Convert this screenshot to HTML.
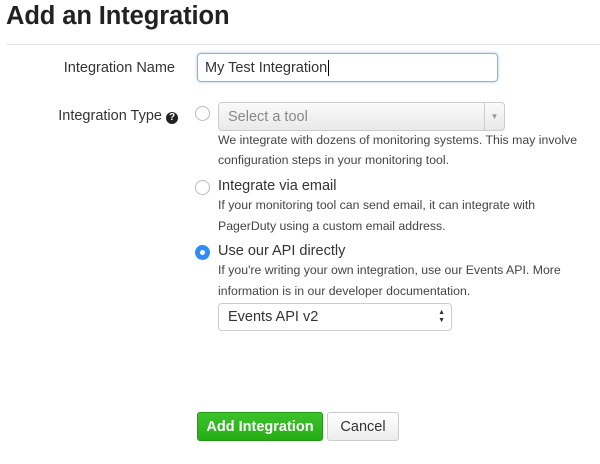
<!DOCTYPE html>
<html><head><style>
*{box-sizing:border-box;margin:0;padding:0}
body{width:600px;height:464px;background:#fff;font-family:"Liberation Sans",sans-serif;color:#333;position:relative;overflow:hidden}
.a{position:absolute;white-space:nowrap}
h1{position:absolute;left:6px;top:2px;font-size:25.5px;font-weight:bold;color:#222;letter-spacing:-0.1px}
.hr{position:absolute;left:6px;right:0;top:44px;border-top:1px solid #e8e8e8}
.lbl{font-size:14.5px;color:#333;text-align:right;width:175px;left:0}
.help{font-size:12.3px;color:#444;left:218px}
.opt{font-size:14.5px;color:#333;left:218px}
.radio{position:absolute;width:15px;height:15px;border-radius:50%;border:1px solid #bbb;background:#fff;left:195px}
</style></head><body>
<h1>Add an Integration</h1>
<div class="hr"></div>
<div class="a lbl" style="top:60px">Integration Name</div>
<div class="a" style="left:197px;top:53px;width:301px;height:29px;border:1px solid #7fb4e8;border-radius:4px;box-shadow:0 0 3px #a8cdf0;font-size:14.5px;padding:6px 7px;color:#333">My Test Integration<span style="border-left:1px solid #000;margin-left:1px"></span></div>
<div class="a lbl" style="top:108px;width:178px">Integration Type <span style="display:inline-block;width:12px;height:12px;border-radius:50%;background:#222;color:#fff;font-size:10px;line-height:12px;text-align:center;font-weight:bold;vertical-align:0">?</span></div>
<div class="radio" style="top:106px"></div>
<div class="a" style="left:218px;top:102px;width:287px;height:29px;border:1px solid #ccc;border-radius:4px;background:linear-gradient(#fafafa,#e9e9e9);font-size:14.5px;color:#888;padding:6px 9px">Select a tool<div style="position:absolute;right:0;top:0;width:20px;height:27px;border-left:1px solid #ccc;color:#999;font-size:8px;text-align:center;line-height:27px">▼</div></div>
<div class="a help" style="top:133px">We integrate with dozens of monitoring systems. This may involve</div>
<div class="a help" style="top:153px">configuration steps in your monitoring tool.</div>
<div class="radio" style="top:180px"></div>
<div class="a opt" style="top:178px">Integrate via email</div>
<div class="a help" style="top:198px">If your monitoring tool can send email, it can integrate with</div>
<div class="a help" style="top:219px">PagerDuty using a custom email address.</div>
<div class="radio" style="top:245px;border:none;background:#2f8df5"><div style="position:absolute;left:5px;top:5px;width:5px;height:5px;border-radius:50%;background:#fff"></div></div>
<div class="a opt" style="top:243px">Use our API directly</div>
<div class="a help" style="top:263px">If you're writing your own integration, use our Events API. More</div>
<div class="a help" style="top:284px">information is in our developer documentation.</div>
<div class="a" style="left:218px;top:303px;width:234px;height:28px;border:1px solid #ccc;border-radius:4px;background:#fff;font-size:14.5px;color:#333;padding:5px 9px">Events API v2<span style="position:absolute;right:6px;top:5px;font-size:7px;line-height:8px;color:#333">▲<br>▼</span></div>
<div class="a" style="left:197px;top:412px;width:126px;height:29px;border:1px solid #1f9a12;border-radius:3px;background:linear-gradient(#3cc32a,#26ad16);color:#fff;font-weight:bold;font-size:14.5px;text-align:center;line-height:28px">Add Integration</div>
<div class="a" style="left:327px;top:412px;width:72px;height:29px;border:1px solid #ccc;border-radius:3px;background:linear-gradient(#fff,#ececec);color:#333;font-size:14.5px;text-align:center;line-height:28px">Cancel</div>
</body></html>
